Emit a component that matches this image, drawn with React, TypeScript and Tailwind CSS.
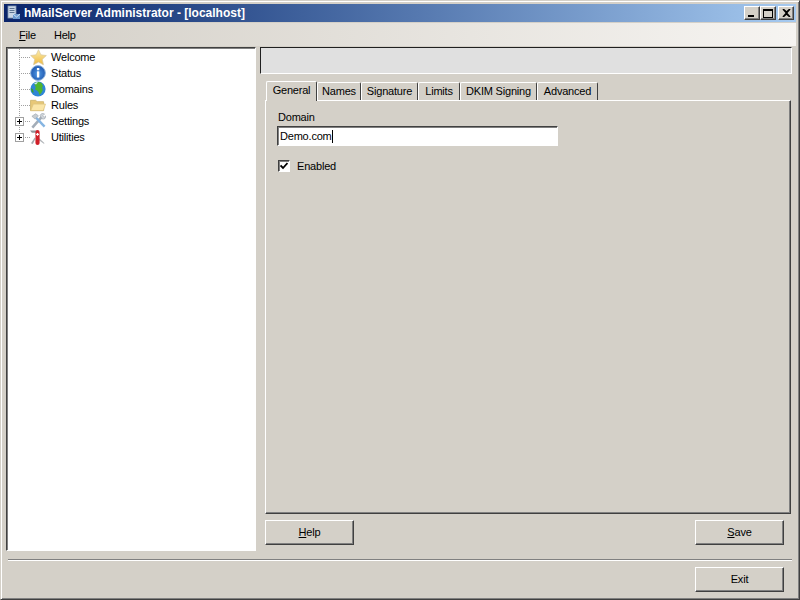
const raised = "border border-t-white border-l-white border-r-[#404040] border-b-[#404040] shadow-[inset_-1px_-1px_0_#808080]";
const sunken = "border border-t-[#404040] border-l-[#404040] border-r-white border-b-white";

const StarIcon = () => (
  <svg width="17" height="17" viewBox="0 0 18 18">
    <defs>
      <linearGradient id="star" x1="0" y1="0" x2="0" y2="1">
        <stop offset="0" stopColor="#fdeeb0" />
        <stop offset="1" stopColor="#eeb93f" />
      </linearGradient>
    </defs>
    <path d="M9 .8l2.500 5.400 5.800.7-4.300 4 1.200 5.800L9 13.800l-5.200 2.900L5 10.900.7 6.900l5.800-.7z" fill="url(#star)" stroke="#d9c9a0" strokeWidth=".8" />
  </svg>
);

const InfoIcon = () => (
  <svg width="16" height="16" viewBox="0 0 16 16">
    <defs>
      <radialGradient id="info" cx=".5" cy=".55" r=".6">
        <stop offset="0" stopColor="#4f9ae6" />
        <stop offset="1" stopColor="#1a4fa8" />
      </radialGradient>
    </defs>
    <circle cx="8" cy="8" r="7.400" fill="url(#info)" stroke="#8fb4dc" strokeWidth="1" />
    <rect x="6.900" y="3" width="2.400" height="2.300" fill="#fff" />
    <rect x="6.900" y="6.300" width="2.400" height="6.200" fill="#fff" />
  </svg>
);

const GlobeIcon = () => (
  <svg width="16" height="16" viewBox="0 0 16 16">
    <circle cx="8" cy="8" r="7.600" fill="#2f86d6" />
    <path d="M5 1.500c2-.9 5-.6 6.500.6L13 5l-1 1.500.8 2.500-1.500 3-2 2-.8-3-1.500-1.500L5 8.500l.8-2.500L4.500 4z" fill="#4fb52e" />
    <path d="M1 7l2 1.500.7 3L2.500 11.500C1.400 10.300 1 8.500 1 7z" fill="#3aa02c" />
    <path d="M4 2.600C5.500 1.400 7 1.200 8 1.300L6 3.500z" fill="#cfe8f8" />
  </svg>
);

const FolderIcon = () => (
  <svg width="16" height="14" viewBox="0 0 17 15">
    <path d="M.5 2.500h5.500l1.500 1.500h7v9.500H.5z" fill="#e8c878" stroke="#d2b871" />
    <path d="M.7 13.500L3.500 6.500h13l-2.300 7z" fill="#fbe6a8" stroke="#dcc27e" strokeWidth=".8" />
  </svg>
);

const ToolsIcon = () => (
  <svg width="16" height="16" viewBox="0 0 17 17">
    <path d="M2.500 15.500L12.500 4" stroke="#a3adb8" strokeWidth="2.800" />
    <path d="M15.500 14.500L6 4.500" stroke="#86b5e2" strokeWidth="2.600" />
    <path d="M2 3.500L6 .8l3 2.200-3.500 3.500z" fill="#c6ccd2" stroke="#98a0a9" strokeWidth=".6" />
    <path d="M10.800 2.800a3 3 0 0 1 4.700-1.800l-2 2 1.500 1.500 2-1.500a3 3 0 0 1-4.200 3.200z" fill="#d0d5da" stroke="#98a0a9" strokeWidth=".6" />
  </svg>
);

const KnifeIcon = () => (
  <svg width="16" height="17" viewBox="0 0 17 18">
    <path d="M0 1.500h7v2.500H2z" fill="#8f9499" />
    <path d="M1 15l4-6 .8 1.200L3 16z" fill="#a6abb0" />
    <path d="M9.500 9.500l6 5.500-.8.700-5.500-4z" fill="#b0b4b8" />
    <rect x="5.800" y="1" width="4.400" height="16" rx="2.200" fill="#cf1f28" />
    <path d="M8 4.200v3M6.500 5.700h3" stroke="#fff" strokeWidth="1.200" />
  </svg>
);

// dotted tree lines, plus the little expander box where a node has children
const TreeLines = ({ last, expander }: { last: boolean; expander: boolean }) => (
  <svg width="23" height="16" viewBox="0 0 23 16" className="shrink-0" shapeRendering="crispEdges">
    <path d={last ? "M12.500 0V8" : "M12.500 0V16"} stroke="#a0a0a0" strokeDasharray="1 1" />
    <path d="M12 8.500H23" stroke="#a0a0a0" strokeDasharray="1 1" />
    {expander && (
      <>
        <rect x="8.500" y="4.500" width="8" height="8" fill="#fff" stroke="#a0a0a0" />
        <path d="M10 8.500h5M12.500 6v5" stroke="#000" />
      </>
    )}
  </svg>
);

const nodes = [
  { label: "Welcome", icon: <StarIcon />, expander: false },
  { label: "Status", icon: <InfoIcon />, expander: false },
  { label: "Domains", icon: <GlobeIcon />, expander: false },
  { label: "Rules", icon: <FolderIcon />, expander: false },
  { label: "Settings", icon: <ToolsIcon />, expander: true },
  { label: "Utilities", icon: <KnifeIcon />, expander: true },
];

const tabs = [
  { label: "Names", width: "w-[44px]" },
  { label: "Signature", width: "w-[57px]" },
  { label: "Limits", width: "w-[42px]" },
  { label: "DKIM Signing", width: "w-[77px]" },
  { label: "Advanced", width: "w-[61px]" },
];

const WinButton = ({ children }: { children: React.ReactNode }) => (
  <div className={`w-[89px] h-[25px] pb-[1px] flex items-center justify-center bg-[#d4d0c8] text-black ${raised}`}>
    {children}
  </div>
);

const CaptionButton = ({ children, className }: { children: React.ReactNode; className?: string }) => (
  <div className={`w-[16px] h-[14px] flex items-center justify-center bg-[#d4d0c8] ${raised} ${className ?? ""}`}>
    {children}
  </div>
);

export default function App() {
  return (
    <div className="w-[800px] h-[600px] flex flex-col overflow-hidden bg-[#d4d0c8] border border-t-[#d4d0c8] border-l-[#d4d0c8] border-r-[#404040] border-b-[#404040] shadow-[inset_1px_1px_0_#fff,inset_-1px_-1px_0_#808080] p-[3px] font-['Liberation_Sans',sans-serif] text-[11px] tracking-[-0.2px] text-black leading-none">
      <div className="h-[18px] shrink-0 flex items-center justify-between pl-[2px] pr-[2px] bg-gradient-to-r from-[#0a246a] to-[#a6caf0]">
        <div className="flex items-center gap-[2px]">
          <svg width="16" height="16" viewBox="0 0 16 16">
            <rect x="2" y="1" width="8" height="12" fill="#c9d6e6" stroke="#7f95b0" strokeWidth=".8" />
            <path d="M3.500 3.500h5M3.500 5.500h5M3.500 7.500h5" stroke="#5d7491" />
            <path d="M7 9h7v5H7z" fill="#6d9bd0" />
            <path d="M7 9l3.500 3L14 9" stroke="#e5eef8" fill="none" strokeWidth=".8" />
          </svg>
          <span className="text-white font-bold text-[12px] tracking-[0px]">hMailServer Administrator - [localhost]</span>
        </div>
        <div className="flex items-center">
          <CaptionButton>
            <span className="w-[6px] h-[2px] bg-black mt-[6px] -ml-[2px]" />
          </CaptionButton>
          <CaptionButton>
            <span className="w-[10px] h-[9px] border border-t-2 border-black" />
          </CaptionButton>
          <CaptionButton className="ml-[2px]">
            <svg width="9" height="8" viewBox="0 0 9 8">
              <path d="M1 0l3.500 3L8 0M1 8l3.500-3L8 8M1 0l7 8M8 0L1 8" stroke="#000" strokeWidth="1.500" fill="none" />
            </svg>
          </CaptionButton>
        </div>
      </div>

      <div className="h-[23px] shrink-0 flex items-center gap-[18px] pl-[15px] pt-[1px] mt-[1px] bg-gradient-to-r from-[#d4d0c8] to-[#f6f4f1]">
        <span><span className="underline">F</span>ile</span>
        <span>Help</span>
      </div>

      <div className="flex gap-[4px] ml-[2px] mt-[1px]">
        <div className={`w-[250px] h-[504px] pt-[1px] bg-white ${sunken} border-r-[#e8e6e1] border-b-[#d4d0c8] shadow-[inset_1px_1px_0_#808080]`}>
          {nodes.map((node, i) => (
            <div key={node.label} className="h-[16px] flex items-center">
              <TreeLines last={i === nodes.length - 1} expander={node.expander} />
              <div className="w-[18px] h-[16px] shrink-0 flex items-center">{node.icon}</div>
              <span className="ml-[3px]">{node.label}</span>
            </div>
          ))}
        </div>

        <div className="w-[532px] flex flex-col">
          <div className="h-[27px] bg-[#e0e0e0] border border-t-[#202020] border-l-[#202020] border-r-white border-b-white" />

          <div className="flex items-end h-[19px] mt-[7px] ml-[6px]">
            <div className="w-[51px] h-[20px] pt-[3px] text-center bg-[#d4d0c8] rounded-t-[2px] border border-b-0 border-t-white border-l-white border-r-[#404040] relative z-10 -mb-px">
              General
            </div>
            {tabs.map((tab) => (
              <div key={tab.label} className={`${tab.width} h-[18px] flex items-center justify-center bg-[#d4d0c8] rounded-t-[2px] border border-b-0 border-t-white border-l-white border-r-[#404040]`}>
                {tab.label}
              </div>
            ))}
          </div>

          <div className={`ml-[5px] mr-[1px] w-[526px] h-[414px] pl-[12px] pt-[11px] ${raised}`}>
            <div className="h-[11px]">Domain</div>
            <div className={`w-[281px] h-[20px] mt-[3px] -ml-[1px] flex items-center pl-[2px] bg-white ${sunken} shadow-[inset_1px_1px_0_#808080]`}>
              Demo.com<span className="w-px h-[13px] bg-black" />
            </div>
            <div className="flex items-center gap-[7px] mt-[14px]">
              <div className={`w-[12px] h-[12px] flex items-center justify-center bg-white ${sunken} shadow-[inset_1px_1px_0_#808080]`}>
                <svg width="8" height="8" viewBox="0 0 8 8">
                  <path d="M.5 3.500L3 6l4.500-5" stroke="#000" strokeWidth="1.800" fill="none" />
                </svg>
              </div>
              <span className="pt-[1px]">Enabled</span>
            </div>
          </div>

          <div className="flex justify-between mt-[6px] ml-[5px] mr-[8px]">
            <WinButton><span><span className="underline">H</span>elp</span></WinButton>
            <WinButton><span><span className="underline">S</span>ave</span></WinButton>
          </div>
        </div>
      </div>

      <div className="h-[2px] mt-[8px] ml-[4px] mr-[4px] shrink-0 bg-[#808080] border-b border-white" />
      <div className="flex justify-end mt-[6px] mr-[12px]">
        <WinButton>Exit</WinButton>
      </div>
    </div>
  );
}
